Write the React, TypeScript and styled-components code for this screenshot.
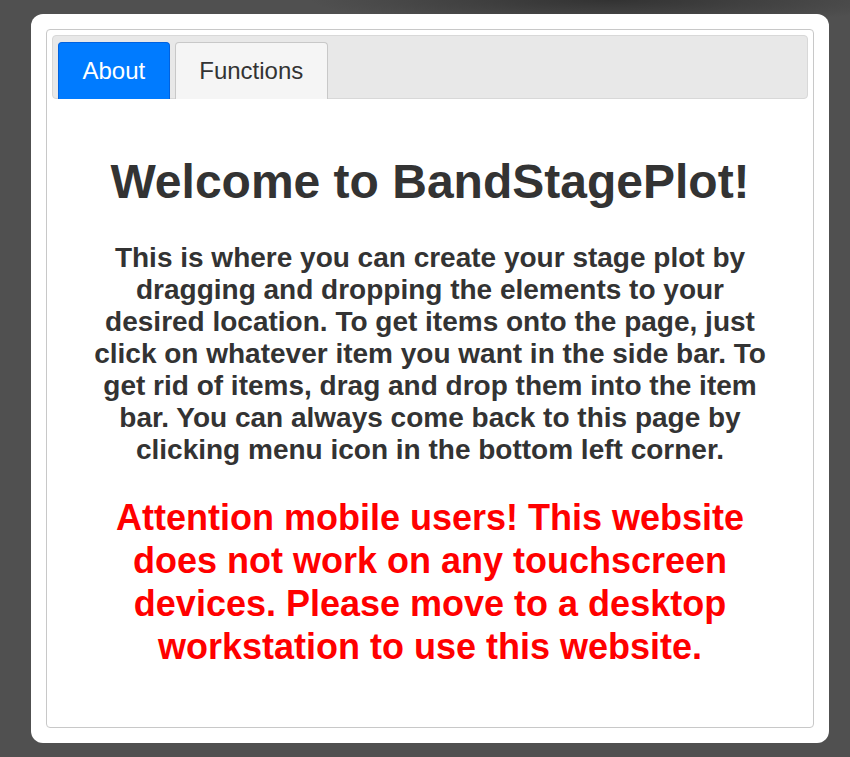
import React, { useState } from "react";
import styled, { createGlobalStyle } from "styled-components";

const Global = createGlobalStyle`
  html, body { margin: 0; padding: 0; }
  body {
    background: #505050;
    background-image: radial-gradient(ellipse 300px 26px at 610px 0px, rgba(45,45,45,0.85), rgba(45,45,45,0) 100%);
    background-repeat: no-repeat;
    font-family: "Liberation Sans", Arial, sans-serif;
    min-height: 757px;
  }
`;

const Page = styled.div`
  padding: 14px 0 0 31px;
`;

const Card = styled.div`
  width: 798px;
  height: 729px;
  box-sizing: border-box;
  background: #fff;
  border-radius: 12px;
  padding: 15px;
`;

const Panel = styled.div`
  height: 100%;
  box-sizing: border-box;
  border: 1px solid #c8c8c8;
  border-radius: 4px;
  padding: 5px;
  display: flex;
  flex-direction: column;
`;

const TabBar = styled.div`
  display: flex;
  gap: 5px;
  align-items: flex-end;
  height: 64px;
  box-sizing: border-box;
  background: #e8e8e8;
  border: 1px solid #d8d8d8;
  border-radius: 4px;
  padding: 6px 5px 0 5px;
`;

const Tab = styled.button<{ $active?: boolean }>`
  height: 57px;
  margin-bottom: -1px;
  box-sizing: border-box;
  border: 1px solid ${(p) => (p.$active ? "#0062e0" : "#c8c8c8")};
  border-bottom: none;
  border-radius: 4px 4px 0 0;
  background: ${(p) => (p.$active ? "#007bff" : "#f5f5f5")};
  color: ${(p) => (p.$active ? "#fff" : "#333")};
  font-family: "Liberation Sans", Arial, sans-serif;
  font-size: 24px;
  padding: 0 23.5px;
  cursor: pointer;
`;

const Content = styled.div`
  flex: 1;
  display: flex;
  flex-direction: column;
  align-items: center;
  text-align: center;
  padding: 54px 40px 0;
`;

const Title = styled.h1`
  margin: 0;
  font-size: 48px;
  line-height: 58px;
  font-weight: 700;
  color: #333;
`;

const Intro = styled.p`
  margin: 31px 0 0;
  font-size: 28px;
  line-height: 32px;
  font-weight: 700;
  color: #333;
  max-width: 680px;
`;

const Warning = styled.p`
  margin: 30px 0 0;
  font-size: 36px;
  line-height: 43px;
  font-weight: 700;
  color: #ff0000;
  max-width: 680px;
`;

export default function App() {
  const [tab, setTab] = useState("about");
  return (
    <>
      <Global />
      <Page>
        <Card>
          <Panel>
            <TabBar>
              <Tab $active={tab === "about"} onClick={() => setTab("about")}>
                About
              </Tab>
              <Tab $active={tab === "functions"} onClick={() => setTab("functions")}>
                Functions
              </Tab>
            </TabBar>
            <Content>
              <Title>Welcome to BandStagePlot!</Title>
              <Intro>
                This is where you can create your stage plot by dragging and dropping the
                elements to your desired location. To get items onto the page, just click on
                whatever item you want in the side bar. To get rid of items, drag and drop them
                into the item bar. You can always come back to this page by clicking menu icon
                in the bottom left corner.
              </Intro>
              <Warning>
                Attention mobile users! This website does not work on any touchscreen devices.
                Please move to a desktop workstation to use this website.
              </Warning>
            </Content>
          </Panel>
        </Card>
      </Page>
    </>
  );
}
